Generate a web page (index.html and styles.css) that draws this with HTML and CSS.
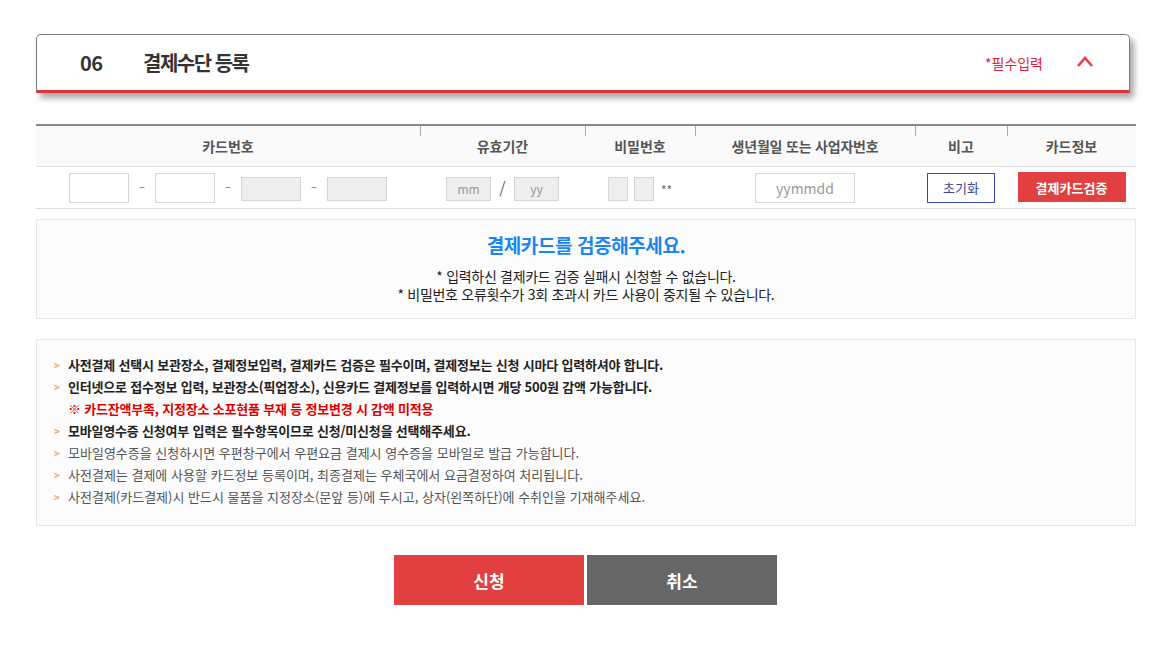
FILE: index.html
```html
<!DOCTYPE html>
<html lang="ko">
<head>
    <meta charset="UTF-8">
    <meta name="viewport" content="width=device-width, initial-scale=1.0">
    <title>결제수단 등록</title>
    <link rel="stylesheet" href="styles.css">
</head>
<body>
    <div class="wrap">
        <div class="step-head">
            <span class="step-num">06</span>
            <h2 class="step-title">결제수단 등록</h2>
            <span class="required">*필수입력</span>
            <svg class="toggle" width="18" height="12" viewBox="0 0 18 12">
                <polyline points="2,11 9,3 16,11" fill="none" stroke="#ec3f42" stroke-width="2.6"/>
            </svg>
        </div>

        <div class="card-table">
            <div class="row head">
                <div class="cell c1">카드번호</div>
                <div class="cell c2">유효기간</div>
                <div class="cell c3">비밀번호</div>
                <div class="cell c4">생년월일 또는 사업자번호</div>
                <div class="cell c5">비고</div>
                <div class="cell c6">카드정보</div>
            </div>
            <div class="row body">
                <div class="cell c1">
                    <input class="inp w60" type="text">
                    <span class="dash">–</span>
                    <input class="inp w60" type="text">
                    <span class="dash">–</span>
                    <input class="inp w60 dis" type="text">
                    <span class="dash">–</span>
                    <input class="inp w60 dis" type="text">
                </div>
                <div class="cell c2">
                    <input class="inp w45 dis" type="text" placeholder="mm">
                    <span class="slash">/</span>
                    <input class="inp w45 dis" type="text" placeholder="yy">
                </div>
                <div class="cell c3">
                    <input class="inp w20 dis" type="text">
                    <input class="inp w20 dis" type="text">
                    <span class="stars">**</span>
                </div>
                <div class="cell c4">
                    <input class="inp w100" type="text" placeholder="yymmdd">
                </div>
                <div class="cell c5">
                    <a href="javascript:void(0)" class="btn-reset">초기화</a>
                </div>
                <div class="cell c6">
                    <a href="javascript:void(0)" class="btn-verify">결제카드검증</a>
                </div>
            </div>
        </div>

        <div class="verify-box">
            <p class="verify-title">결제카드를 검증해주세요.</p>
            <p class="verify-text">* 입력하신 결제카드 검증 실패시 신청할 수 없습니다.</p>
            <p class="verify-text">* 비밀번호 오류횟수가 3회 초과시 카드 사용이 중지될 수 있습니다.</p>
        </div>

        <ul class="notes">
            <li class="strong">사전결제 선택시 보관장소, 결제정보입력, 결제카드 검증은 필수이며, 결제정보는 신청 시마다 입력하셔야 합니다.</li>
            <li class="strong">인터넷으로 접수정보 입력, 보관장소(픽업장소), 신용카드 결제정보를 입력하시면 개당 500원 감액 가능합니다.</li>
            <li class="warn">※ 카드잔액부족, 지정장소 소포현품 부재 등 정보변경 시 감액 미적용</li>
            <li class="strong">모바일영수증 신청여부 입력은 필수항목이므로 신청/미신청을 선택해주세요.</li>
            <li>모바일영수증을 신청하시면 우편창구에서 우편요금 결제시 영수증을 모바일로 발급 가능합니다.</li>
            <li>사전결제는 결제에 사용할 카드정보 등록이며, 최종결제는 우체국에서 요금결정하여 처리됩니다.</li>
            <li>사전결제(카드결제)시 반드시 물품을 지정장소(문앞 등)에 두시고, 상자(왼쪽하단)에 수취인을 기재해주세요.</li>
        </ul>

        <div class="actions">
            <a href="javascript:void(0)" class="btn-big apply">신청</a>
            <a href="javascript:void(0)" class="btn-big cancel">취소</a>
        </div>
    </div>
</body>
</html>
```

FILE: styles.css
```css
body {
    margin: 0;
    padding: 0;
    background: #ffffff;
    font-family: 'Noto Sans CJK KR', 'Noto Sans', sans-serif;
    color: #333;
}

p, ul, h2 {
    margin: 0;
    padding: 0;
}

a {
    text-decoration: none;
}

.wrap {
    width: 1100px;
    margin-left: 36px;
    padding-top: 34px;
}

/* step header */
.step-head {
    width: 1092px;
    height: 55px;
    border: 1px solid #7a7a7a;
    border-bottom: 3px solid #e2323d;
    border-radius: 5px 5px 0 0;
    box-shadow: 4px 5px 6px rgba(0, 0, 0, 0.35);
    display: flex;
    align-items: center;
}

.step-num {
    width: 63px;
    margin-left: 43px;
    font-size: 20px;
    font-weight: bold;
    color: #333;
    letter-spacing: -0.5px;
}

.step-title {
    font-size: 20px;
    font-weight: bold;
    color: #333;
    letter-spacing: -1.5px;
    flex: 1;
}

.required {
    font-size: 14px;
    color: #e0203a;
    letter-spacing: 0;
    margin-right: 33px;
}

.toggle {
    margin-right: 35px;
    margin-top: -3px;
}

/* card table */
.card-table {
    margin-top: 31px;
    border-top: 2px solid #888;
}

.row {
    display: flex;
    border-bottom: 1px solid #ddd;
}

.row.head {
    height: 40px;
    background: #fafafa;
}

.row.body {
    height: 41px;
}

.cell {
    display: flex;
    align-items: center;
    justify-content: center;
    position: relative;
}

.row.head .cell {
    font-size: 14px;
    font-weight: bold;
    color: #555;
    letter-spacing: 0;
}

.row.head .c4 {
    letter-spacing: -0.2px;
}

.row.head .cell + .cell::before {
    content: '';
    position: absolute;
    left: 0;
    top: 0;
    width: 1px;
    height: 10px;
    background: #aaa;
}

.c1 { width: 384px; }
.c2 { width: 165px; }
.c3 { width: 110px; }
.c4 { width: 220px; }
.c5 { width: 92px; }
.c6 { width: 129px; }

.inp {
    box-sizing: border-box;
    height: 30px;
    margin: 0;
    padding: 0;
    border: 1px solid #d6d6d6;
    background: #fff;
    font-family: 'Noto Sans CJK KR', 'Noto Sans', sans-serif;
    font-size: 14px;
    color: #333;
    text-align: center;
    outline: none;
}

.inp::placeholder {
    color: #999;
}

.inp.dis {
    height: 24px;
    background: #eeeeee;
    font-size: 12px;
    margin-top: 2px;
}

.w60 { width: 60px; }
.w45 { width: 45px; }
.w20 { width: 20px; }
.w100 { width: 100px; }

.dash {
    width: 26px;
    text-align: center;
    font-size: 11px;
    color: #666;
    margin-top: -4px;
}

.slash {
    width: 23px;
    text-align: center;
    font-size: 16px;
    color: #666;
}

.c3 .w20 + .w20 {
    margin-left: 6px;
}

.stars {
    font-size: 12px;
    color: #666;
    margin-left: 7px;
    margin-top: 3px;
}

.btn-reset {
    box-sizing: border-box;
    width: 68px;
    height: 30px;
    border: 1px solid #3549a8;
    color: #3a4a90;
    font-size: 13px;
    display: flex;
    align-items: center;
    justify-content: center;
}

.btn-verify {
    width: 108px;
    height: 30px;
    margin-top: -1px;
    background: #e24040;
    color: #fff;
    font-size: 13px;
    font-weight: bold;
    letter-spacing: 0;
    display: flex;
    align-items: center;
    justify-content: center;
}

/* verify message */
.verify-box {
    margin-top: 10px;
    height: 98px;
    border: 1px solid #e6e6e6;
    background: #fcfcfc;
    text-align: center;
}

.verify-title {
    margin-top: 12px;
    font-size: 19px;
    line-height: 26px;
    font-weight: bold;
    color: #1a86f2;
    letter-spacing: -0.4px;
}

.verify-title + .verify-text {
    margin-top: 9px;
}

.verify-text {
    font-size: 14px;
    line-height: 18px;
    color: #222;
    letter-spacing: -0.3px;
}

/* notes */
.notes {
    margin-top: 20px;
    border: 1px solid #e6e6e6;
    background: #fcfcfc;
    padding: 14px 20px 17px 17px;
    list-style: none;
}

.notes li {
    position: relative;
    padding-left: 14px;
    font-size: 13px;
    line-height: 22px;
    color: #555;
    letter-spacing: 0;
}

.notes li::before {
    content: '>';
    position: absolute;
    left: 0;
    top: 0;
    font-size: 10px;
    color: #e8a46a;
    font-weight: bold;
}

.notes li.strong {
    color: #222;
    font-weight: bold;
    letter-spacing: -0.2px;
}

.notes li.warn {
    color: #e00000;
    font-weight: bold;
    letter-spacing: -0.2px;
}

.notes li.warn::before {
    content: none;
}

/* bottom buttons */
.actions {
    margin-top: 29px;
    display: flex;
    justify-content: center;
    gap: 3px;
    padding-right: 1px;
}

.btn-big {
    width: 190px;
    height: 50px;
    display: flex;
    align-items: center;
    justify-content: center;
    color: #fff;
    font-size: 17px;
    font-weight: bold;
}

.apply { background: #e24040; }
.cancel { background: #666666; }
```
